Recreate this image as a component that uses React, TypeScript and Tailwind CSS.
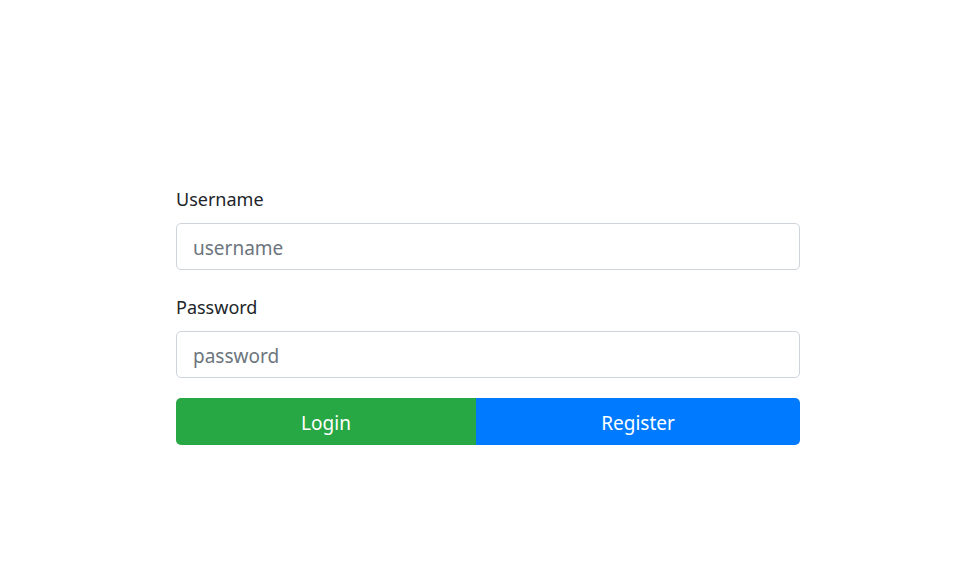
export default function App() {
  return (
    <div className="min-h-screen bg-white font-['Noto_Sans','Open_Sans',sans-serif] text-[#212529]">
      <div className="ml-[176px] w-[624px] pt-[186px]">
        <div className="mb-[24px]">
          <label className="mb-[10px] block text-[18px] leading-[27px]">Username</label>
          <input
            type="text"
            placeholder="username"
            className="block h-[47px] w-full rounded-[5px] border border-[#ced4da] px-[16px] pt-[2px] text-[19px] placeholder:text-[#6c757d] outline-none"
          />
        </div>
        <div className="mb-[20px]">
          <label className="mb-[10px] block text-[18px] leading-[27px]">Password</label>
          <input
            type="password"
            placeholder="password"
            className="block h-[47px] w-full rounded-[5px] border border-[#ced4da] px-[16px] pt-[2px] text-[19px] placeholder:text-[#6c757d] outline-none"
          />
        </div>
        <div className="flex h-[47px]">
          <button className="w-[300px] rounded-l-[5px] bg-[#28a745] pt-[4px] text-[19px] text-white">Login</button>
          <button className="flex-1 rounded-r-[5px] bg-[#007bff] pt-[4px] text-[19px] text-white">Register</button>
        </div>
      </div>
    </div>
  );
}
